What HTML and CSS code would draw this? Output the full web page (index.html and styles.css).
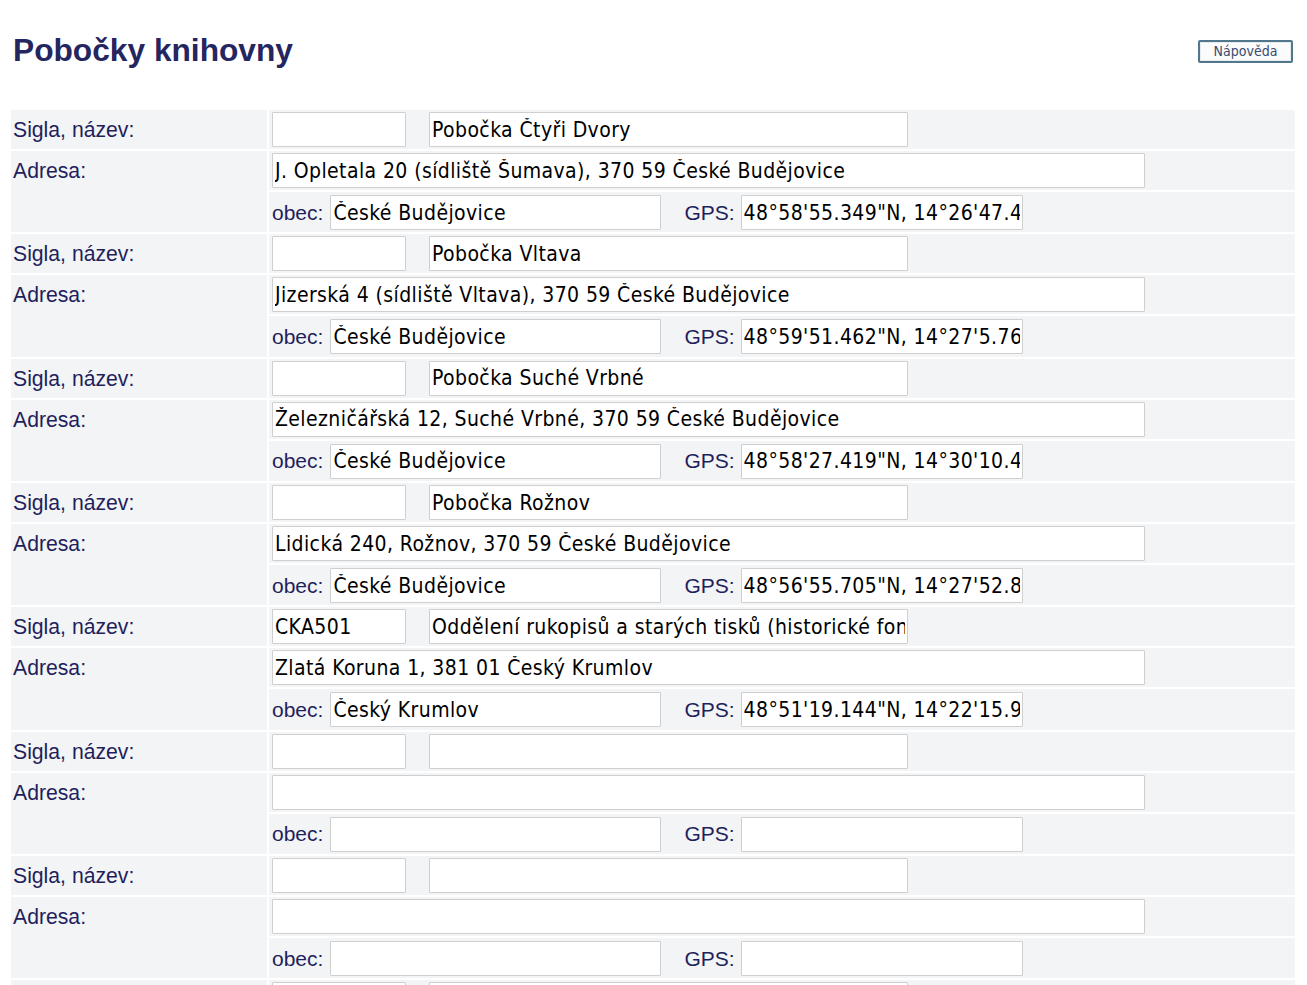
FILE: index.html
```html
<!DOCTYPE html>
<html lang="cs">
<head>
    <meta charset="UTF-8">
    <title>Pobočky knihovny</title>
    <link rel="stylesheet" href="styles.css">
</head>
<body>
    <div class="page-header">
        <h1>Pobočky knihovny</h1>
        <button class="help-btn" type="button">Nápověda</button>
    </div>

    <table class="branches">
        <tr>
            <th class="label">Sigla, název:</th>
            <td class="val"><div class="line"><input class="f-sigla" value=""><input class="f-nazev" value="Pobočka Čtyři Dvory"></div></td>
        </tr>
        <tr>
            <th class="label" rowspan="2">Adresa:</th>
            <td class="val"><div class="line"><input class="f-adresa" value="J. Opletala 20 (sídliště Šumava), 370 59 České Budějovice"></div></td>
        </tr>
        <tr>
            <td class="val last"><div class="line"><span class="sub">obec:</span><input class="f-obec" value="České Budějovice"><span class="sub gps-lbl">GPS:</span><input class="f-gps" value="48°58'55.349&quot;N, 14°26'47.4"></div></td>
        </tr>

        <tr>
            <th class="label">Sigla, název:</th>
            <td class="val"><div class="line"><input class="f-sigla" value=""><input class="f-nazev" value="Pobočka Vltava"></div></td>
        </tr>
        <tr>
            <th class="label" rowspan="2">Adresa:</th>
            <td class="val"><div class="line"><input class="f-adresa" value="Jizerská 4 (sídliště Vltava), 370 59 České Budějovice"></div></td>
        </tr>
        <tr>
            <td class="val last"><div class="line"><span class="sub">obec:</span><input class="f-obec" value="České Budějovice"><span class="sub gps-lbl">GPS:</span><input class="f-gps" value="48°59'51.462&quot;N, 14°27'5.76"></div></td>
        </tr>

        <tr>
            <th class="label">Sigla, název:</th>
            <td class="val"><div class="line"><input class="f-sigla" value=""><input class="f-nazev" value="Pobočka Suché Vrbné"></div></td>
        </tr>
        <tr>
            <th class="label" rowspan="2">Adresa:</th>
            <td class="val"><div class="line"><input class="f-adresa" value="Železničářská 12, Suché Vrbné, 370 59 České Budějovice"></div></td>
        </tr>
        <tr>
            <td class="val last"><div class="line"><span class="sub">obec:</span><input class="f-obec" value="České Budějovice"><span class="sub gps-lbl">GPS:</span><input class="f-gps" value="48°58'27.419&quot;N, 14°30'10.4"></div></td>
        </tr>

        <tr>
            <th class="label">Sigla, název:</th>
            <td class="val"><div class="line"><input class="f-sigla" value=""><input class="f-nazev" value="Pobočka Rožnov"></div></td>
        </tr>
        <tr>
            <th class="label" rowspan="2">Adresa:</th>
            <td class="val"><div class="line"><input class="f-adresa" value="Lidická 240, Rožnov, 370 59 České Budějovice"></div></td>
        </tr>
        <tr>
            <td class="val last"><div class="line"><span class="sub">obec:</span><input class="f-obec" value="České Budějovice"><span class="sub gps-lbl">GPS:</span><input class="f-gps" value="48°56'55.705&quot;N, 14°27'52.8"></div></td>
        </tr>

        <tr>
            <th class="label">Sigla, název:</th>
            <td class="val"><div class="line"><input class="f-sigla" value="CKA501"><input class="f-nazev" value="Oddělení rukopisů a starých tisků (historické fondy)"></div></td>
        </tr>
        <tr>
            <th class="label" rowspan="2">Adresa:</th>
            <td class="val"><div class="line"><input class="f-adresa" value="Zlatá Koruna 1, 381 01 Český Krumlov"></div></td>
        </tr>
        <tr>
            <td class="val last"><div class="line"><span class="sub">obec:</span><input class="f-obec" value="Český Krumlov"><span class="sub gps-lbl">GPS:</span><input class="f-gps" value="48°51'19.144&quot;N, 14°22'15.9"></div></td>
        </tr>

        <!-- empty rows for new branches -->
        <tr>
            <th class="label">Sigla, název:</th>
            <td class="val"><div class="line"><input class="f-sigla"><input class="f-nazev"></div></td>
        </tr>
        <tr>
            <th class="label" rowspan="2">Adresa:</th>
            <td class="val"><div class="line"><input class="f-adresa"></div></td>
        </tr>
        <tr>
            <td class="val last"><div class="line"><span class="sub">obec:</span><input class="f-obec"><span class="sub gps-lbl">GPS:</span><input class="f-gps"></div></td>
        </tr>

        <tr>
            <th class="label">Sigla, název:</th>
            <td class="val"><div class="line"><input class="f-sigla"><input class="f-nazev"></div></td>
        </tr>
        <tr>
            <th class="label" rowspan="2">Adresa:</th>
            <td class="val"><div class="line"><input class="f-adresa"></div></td>
        </tr>
        <tr>
            <td class="val last"><div class="line"><span class="sub">obec:</span><input class="f-obec"><span class="sub gps-lbl">GPS:</span><input class="f-gps"></div></td>
        </tr>

        <tr>
            <th class="label">Sigla, název:</th>
            <td class="val"><div class="line"><input class="f-sigla"><input class="f-nazev"></div></td>
        </tr>
        <tr>
            <th class="label" rowspan="2">Adresa:</th>
            <td class="val"><div class="line"><input class="f-adresa"></div></td>
        </tr>
        <tr>
            <td class="val last"><div class="line"><span class="sub">obec:</span><input class="f-obec"><span class="sub gps-lbl">GPS:</span><input class="f-gps"></div></td>
        </tr>
    </table>
</body>
</html>
```

FILE: styles.css
```css
* {
    box-sizing: border-box;
}

body {
    margin: 0;
    padding: 20px 10px 40px 9px;
    background: #ffffff;
    font-family: "Liberation Sans", Arial, sans-serif;
    color: #1f1f5c;
}

.page-header {
    display: flex;
    align-items: center;
    justify-content: space-between;
    height: 62px;
    padding: 0 4px 0 4px;
    margin-bottom: 26px;
}

h1 {
    margin: 0;
    font-size: 31.7px;
    font-weight: bold;
    color: #25255f;
    line-height: 1;
}

.help-btn {
    width: 95px;
    height: 23px;
    padding: 0;
    background: #fbfbfb;
    border: 2px solid #52768c;
    border-radius: 2px;
    box-shadow: inset 0 0 0 1px #e4ecf0;
    font-family: "DejaVu Sans", sans-serif;
    font-stretch: condensed;
    font-size: 14px;
    color: #3a4a70;
    cursor: pointer;
}

.branches {
    width: 100%;
    border-collapse: separate;
    border-spacing: 2px;
}

.label {
    width: 256px;
    padding: 0 2px;
    background: #f3f4f6;
    text-align: left;
    vertical-align: top;
    font-weight: normal;
    font-size: 21.2px;
    line-height: 39px;
    color: #1f1f5c;
    white-space: nowrap;
}

.val {
    padding: 2px 3px 2px 3px;
    background: #f3f4f6;
}

.val.last {
    padding-top: 3px;
    padding-bottom: 2.35px;
}

.line {
    display: flex;
    align-items: center;
}

.sub {
    font-size: 21px;
    color: #1f1f5c;
    margin-right: 7px;
}

.gps-lbl {
    margin-left: 23px;
    margin-right: 6px;
}

input {
    height: 35px;
    margin: 0;
    padding: 0 2px;
    border: 1px solid #cfcfcf;
    border-radius: 1px;
    background: #ffffff;
    font-family: "DejaVu Sans Condensed", "DejaVu Sans", sans-serif;
    font-stretch: condensed;
    font-size: 21px;
    letter-spacing: 0.4px;
    color: #000000;
    outline: none;
}

.f-sigla {
    width: 134px;
    margin-right: 23px;
}

.f-nazev {
    width: 479px;
}

.f-adresa {
    width: 873px;
}

.f-obec {
    width: 331px;
}

.f-gps {
    width: 282px;
}
```
